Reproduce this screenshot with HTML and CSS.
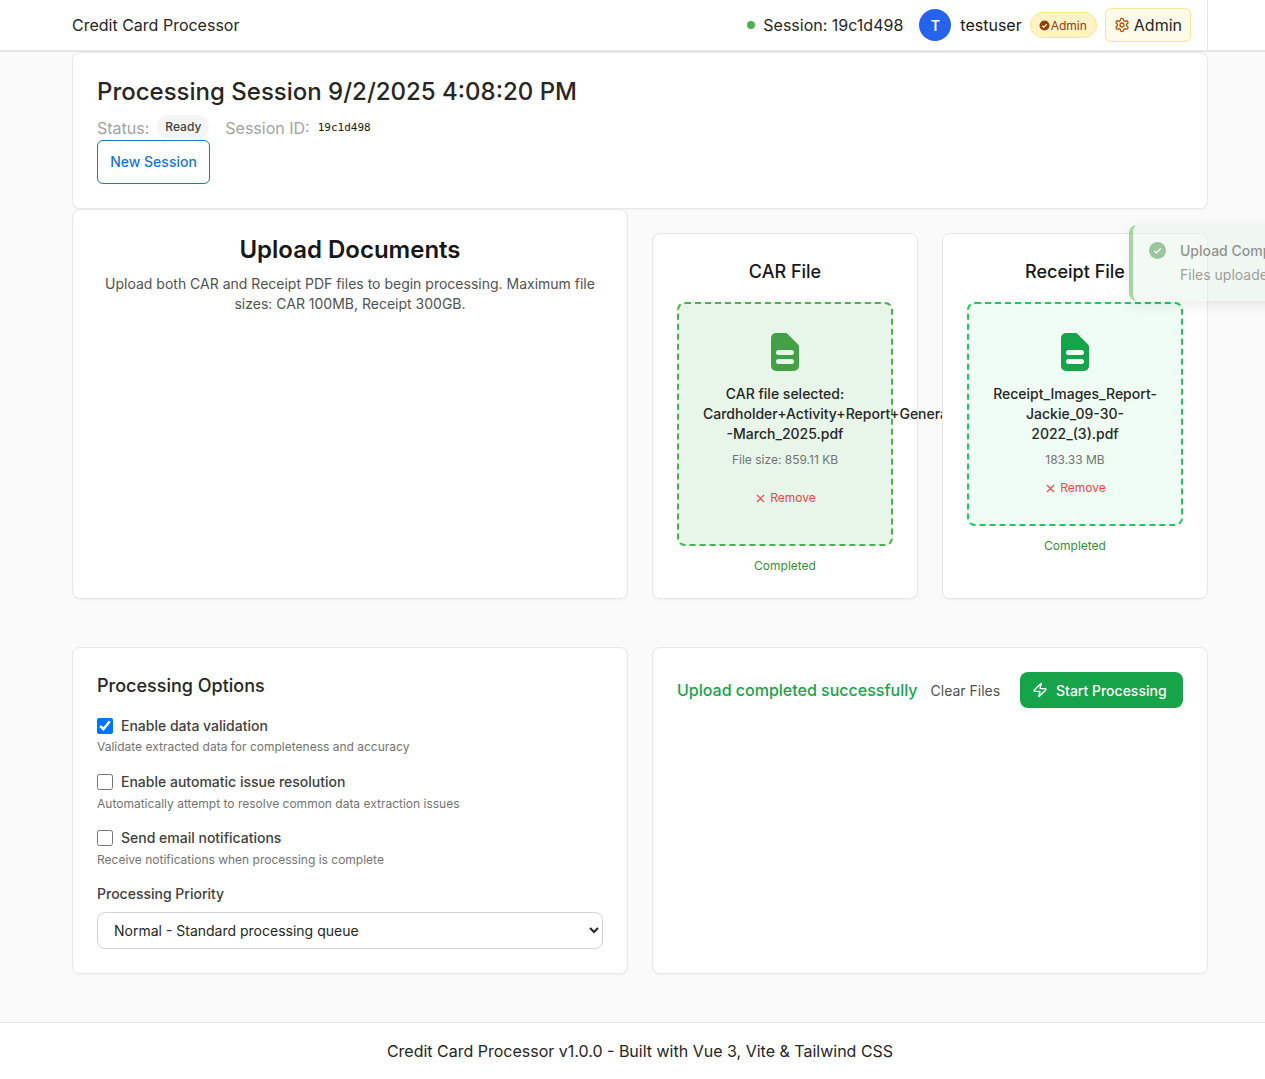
FILE: index.html
```html
<!DOCTYPE html>
<html lang="en">
<head>
  <meta http-equiv="Content-Type" content="text/html; charset=UTF-8">
  <title>Credit Card Processor</title>
  <link rel="stylesheet" href="styles.css">
</head>
<body>
  <div class="app">
    <header class="topbar">
      <div class="topbar-inner">
        <span class="brand">Credit Card Processor</span>
        <div class="topbar-right">
          <span class="session-dot"></span>
          <span class="session-label">Session: 19c1d498</span>
          <span class="avatar">T</span>
          <span class="username">testuser</span>
          <span class="role-pill">
            <svg class="role-icon" viewBox="0 0 24 24"><circle cx="12" cy="12" r="11" fill="#92400e"/><path d="M7 12.500l3.500 3.500 6.500-7" fill="none" stroke="#fef3c7" stroke-width="3"/></svg>
            Admin
          </span>
          <button class="admin-btn">
            <svg class="gear" viewBox="0 0 24 24" fill="none" stroke="#b45309" stroke-width="2" stroke-linecap="round" stroke-linejoin="round"><path d="M12.220 2h-.44a2 2 0 0 0-2 2v.18a2 2 0 0 1-1 1.730l-.43.25a2 2 0 0 1-2 0l-.15-.08a2 2 0 0 0-2.730.73l-.22.38a2 2 0 0 0 .73 2.730l.15.1a2 2 0 0 1 1 1.720v.51a2 2 0 0 1-1 1.740l-.15.09a2 2 0 0 0-.73 2.730l.22.380a2 2 0 0 0 2.730.73l.15-.08a2 2 0 0 1 2 0l.43.25a2 2 0 0 1 1 1.730V20a2 2 0 0 0 2 2h.44a2 2 0 0 0 2-2v-.18a2 2 0 0 1 1-1.730l.43-.25a2 2 0 0 1 2 0l.15.08a2 2 0 0 0 2.730-.73l.22-.39a2 2 0 0 0-.73-2.730l-.15-.08a2 2 0 0 1-1-1.740v-.5a2 2 0 0 1 1-1.740l.15-.09a2 2 0 0 0 .73-2.730l-.22-.380a2 2 0 0 0-2.730-.73l-.15.08a2 2 0 0 1-2 0l-.43-.25a2 2 0 0 1-1-1.730V4a2 2 0 0 0-2-2z"/><circle cx="12" cy="12" r="3"/></svg>
            Admin
          </button>
        </div>
      </div>
    </header>

    <main class="container">
      <section class="card session-card">
        <h1 class="session-title">Processing Session 9/2/2025 4:08:20 PM</h1>
        <div class="session-meta">
          <span class="meta-label">Status:</span>
          <span class="status-pill">Ready</span>
          <span class="meta-label meta-gap">Session ID:</span>
          <code class="session-id">19c1d498</code>
        </div>
        <button class="new-session">New Session</button>
      </section>

      <div class="upload-grid">
        <section class="card upload-intro">
          <h2>Upload Documents</h2>
          <p>Upload both CAR and Receipt PDF files to begin processing. Maximum file sizes: CAR 100MB, Receipt 300GB.</p>
        </section>
        <div class="file-cards">
          <section class="card file-card">
            <h3>CAR File</h3>
            <div class="dropzone dropzone-car">
              <svg class="file-icon" viewBox="0 0 28 38"><path d="M5 0h9.500a3 3 0 0 1 2.100.9l10.500 10.500a3 3 0 0 1 .9 2.100V33a5 5 0 0 1-5 5H5a5 5 0 0 1-5-5V5a5 5 0 0 1 5-5z" fill="#43a047"/><rect x="5" y="17" width="18" height="5" rx="2.500" fill="#e8f5e9"/><rect x="5" y="26" width="18" height="5" rx="2.500" fill="#e8f5e9"/></svg>
              <p class="file-name">CAR file selected: Cardholder+Activity+Report+General<wbr>-March_2025.pdf</p>
              <p class="file-size">File size: 859.11 KB</p>
              <button class="remove remove-spaced"><svg class="remove-x" viewBox="0 0 24 24" fill="none" stroke="currentColor" stroke-width="2" stroke-linecap="round"><path d="M18 6L6 18M6 6l12 12"/></svg>Remove</button>
            </div>
            <p class="file-state">Completed</p>
          </section>
          <section class="card file-card">
            <h3>Receipt File</h3>
            <div class="dropzone dropzone-receipt">
              <svg class="file-icon" viewBox="0 0 28 38"><path d="M5 0h9.500a3 3 0 0 1 2.100.9l10.500 10.500a3 3 0 0 1 .9 2.100V33a5 5 0 0 1-5 5H5a5 5 0 0 1-5-5V5a5 5 0 0 1 5-5z" fill="#16a34a"/><rect x="5" y="17" width="18" height="5" rx="2.500" fill="#f0fdf4"/><rect x="5" y="26" width="18" height="5" rx="2.500" fill="#f0fdf4"/></svg>
              <p class="file-name">Receipt_Images_Report-Jackie_09-30-2022_(3).pdf</p>
              <p class="file-size">183.33 MB</p>
              <button class="remove"><svg class="remove-x" viewBox="0 0 24 24" fill="none" stroke="currentColor" stroke-width="2" stroke-linecap="round"><path d="M18 6L6 18M6 6l12 12"/></svg>Remove</button>
            </div>
            <p class="file-state">Completed</p>
          </section>
        </div>
      </div>

      <div class="bottom-grid">
        <section class="card options-card">
          <h3>Processing Options</h3>
          <div class="option">
            <label class="option-label"><input type="checkbox" checked>Enable data validation</label>
            <p class="option-help">Validate extracted data for completeness and accuracy</p>
          </div>
          <div class="option">
            <label class="option-label"><input type="checkbox">Enable automatic issue resolution</label>
            <p class="option-help">Automatically attempt to resolve common data extraction issues</p>
          </div>
          <div class="option">
            <label class="option-label"><input type="checkbox">Send email notifications</label>
            <p class="option-help">Receive notifications when processing is complete</p>
          </div>
          <label class="priority-label">Processing Priority</label>
          <select class="priority">
            <option>Normal - Standard processing queue</option>
          </select>
        </section>
        <section class="card actions-card">
          <div class="actions">
            <span class="upload-ok">Upload completed successfully</span>
            <button class="clear-files">Clear Files</button>
            <button class="start">
              <svg class="zap" viewBox="0 0 24 24" fill="none" stroke="#fff" stroke-width="2" stroke-linecap="round" stroke-linejoin="round"><path d="M4 14a1 1 0 0 1-.78-1.630l9.900-10.200a.5.5 0 0 1 .86.46l-1.920 6.020A1 1 0 0 0 13 10h7a1 1 0 0 1 .78 1.630l-9.900 10.200a.5.5 0 0 1-.86-.46l1.920-6.020A1 1 0 0 0 11 14z"/></svg>
              Start Processing
            </button>
          </div>
        </section>
      </div>
    </main>

    <footer class="footer">Credit Card Processor v1.0.0 - Built with Vue 3, Vite &amp; Tailwind CSS</footer>

    <div class="toast">
      <svg class="toast-icon" viewBox="0 0 24 24"><circle cx="12" cy="12" r="12" fill="#388e3c"/><path d="M7.500 12.500l3 3 6-6.500" fill="none" stroke="#fff" stroke-width="2"/></svg>
      <div class="toast-body">
        <div class="toast-title">Upload Complete</div>
        <div class="toast-text">Files uploaded successfully</div>
      </div>
    </div>
  </div>
</body>
</html>
```

FILE: styles.css
```css
* {
  box-sizing: border-box;
}
html, body {
  margin: 0;
  height: 1079px;
  overflow: hidden;
}
body {
  font-family: Inter, "Liberation Sans", sans-serif;
  color: #171717;
  background: #fafafa;
}
p, h1, h2, h3 {
  margin: 0;
}
button {
  font-family: inherit;
  background: none;
  border: 0;
  padding: 0;
  cursor: pointer;
}
.app {
  position: relative;
  width: 1280px;
  height: 1079px;
  display: flex;
  flex-direction: column;
}

/* top bar */
.topbar {
  height: 52px;
  flex: none;
  background: #fff;
  border-bottom: 2px solid #e5e5e5;
}
.topbar-inner {
  width: 1136px;
  height: 50px;
  margin: 0 auto;
  display: flex;
  align-items: center;
  justify-content: space-between;
  border-right: 1px solid #e5e5e5;
  padding-right: 16px;
}
.brand {
  font-size: 16px;
  color: #262626;
}
.topbar-right {
  display: flex;
  align-items: center;
  font-size: 16px;
}
.session-dot {
  width: 8px;
  height: 8px;
  border-radius: 50%;
  background: #4caf50;
  margin-right: 8px;
}
.session-label {
  color: #262626;
  margin-right: 16px;
}
.avatar {
  width: 32px;
  height: 32px;
  border-radius: 50%;
  background: #2563eb;
  color: #fff;
  font-size: 14px;
  font-weight: 600;
  display: flex;
  align-items: center;
  justify-content: center;
  margin-right: 9px;
}
.username {
  color: #171717;
  margin-right: 8px;
}
.role-pill {
  display: flex;
  align-items: center;
  gap: 1px;
  height: 26px;
  padding: 0 9px 0 8px;
  font-size: 12px;
  color: #92400e;
  background: #fef3c7;
  border: 1px solid #fde68a;
  border-radius: 13px;
  margin-right: 8px;
}
.role-icon {
  width: 11px;
  height: 11px;
}
.admin-btn {
  display: flex;
  align-items: center;
  gap: 4px;
  height: 34px;
  padding: 0 8px;
  font-size: 16px;
  color: #262626;
  background: #fffbeb;
  border: 1px solid #fde68a;
  border-radius: 6px;
}
.gear {
  width: 16px;
  height: 16px;
}

/* page */
.container {
  width: 1136px;
  margin: 0 auto;
  flex: 1;
}
.card {
  position: relative;
  background: #fff;
  border: 1px solid #e8e8e8;
  border-radius: 8px;
  padding: 24px;
  box-shadow: 0 1px 2px rgba(0, 0, 0, 0.04);
}
.session-card {
  height: 157px;
  padding-top: 23px;
}
.session-title {
  font-size: 24px;
  font-weight: 500;
  line-height: 32px;
  color: #262626;
}
.session-meta {
  display: flex;
  align-items: flex-start;
  height: 24px;
  margin-top: 8px;
}
.meta-label {
  font-size: 16px;
  line-height: 24px;
  color: #a3a3a3;
}
.meta-gap {
  margin-left: 16px;
}
.status-pill {
  height: 24px;
  line-height: 24px;
  margin: -1px 0 0 8px;
  padding: 0 8px;
  font-size: 12px;
  font-weight: 500;
  color: #404040;
  background: #f5f5f5;
  border-radius: 12px;
}
.session-id {
  font-family: "DejaVu Sans Mono", monospace;
  font-size: 11px;
  line-height: 20px;
  margin: 2px 0 0 8px;
  color: #171717;
}
.new-session {
  display: block;
  width: 113px;
  height: 44px;
  padding-bottom: 2px;
  font-size: 14px;
  font-weight: 500;
  color: #1976d2;
  border: 1px solid #1976d2;
  border-radius: 6px;
}
.upload-grid {
  display: grid;
  grid-template-columns: 556px 556px;
  gap: 24px;
}
.upload-intro {
  height: 390px;
  text-align: center;
}
.upload-intro h2 {
  font-size: 24px;
  font-weight: 600;
  line-height: 32px;
}
.upload-intro p {
  font-size: 14px;
  line-height: 20px;
  color: #525252;
  margin-top: 8px;
}
.file-cards {
  display: grid;
  grid-template-columns: 266px 266px;
  gap: 24px;
  margin-top: 24px;
}
.file-card {
  text-align: center;
  height: 366px;
}
.file-card h3 {
  font-size: 18px;
  font-weight: 500;
  line-height: 28px;
  margin-bottom: 16px;
}
.dropzone {
  padding: 29px 24px 25px;
  border: 2px dashed;
  border-radius: 8px;
}
.dropzone-car {
  background: #e8f5e9;
  border-color: #4caf50;
}
.dropzone-receipt {
  background: #f0fdf4;
  border-color: #22c55e;
}
.file-icon {
  display: block;
  width: 28px;
  height: 38px;
  margin: 0 auto 13px;
}
.file-name {
  font-size: 14px;
  font-weight: 500;
  line-height: 20px;
  color: #262626;
}
.file-size {
  font-size: 12px;
  line-height: 16px;
  margin-top: 8px;
  color: #737373;
}
.remove {
  display: inline-flex;
  align-items: center;
  gap: 3px;
  font-size: 12px;
  line-height: 16px;
  color: #ef4444;
  margin-top: 12px;
}
.remove-spaced {
  margin-top: 22px;
  margin-bottom: 13px;
}
.remove-x {
  width: 13px;
  height: 13px;
}
.file-state {
  font-size: 12px;
  line-height: 16px;
  margin-top: 12px;
  color: #388e3c;
}

/* bottom row */
.bottom-grid {
  display: grid;
  grid-template-columns: 556px 556px;
  gap: 24px;
  margin-top: 48px;
}
.options-card {
  height: 327px;
}
.options-card h3 {
  font-size: 18px;
  font-weight: 500;
  line-height: 28px;
  color: #262626;
  margin-bottom: 16px;
}
.option {
  margin-bottom: 16.800px;
}
.option-label {
  display: flex;
  align-items: center;
  font-size: 14px;
  font-weight: 500;
  line-height: 20px;
  color: #404040;
}
.option-label input {
  width: 16px;
  height: 16px;
  margin: 0 8px 0 0;
}
.option-help {
  font-size: 12px;
  line-height: 16px;
  margin-top: 3.400px;
  color: #737373;
}
.priority-label {
  display: block;
  font-size: 14px;
  font-weight: 500;
  line-height: 20px;
  color: #404040;
  margin: -0.600px 0 8px;
}
.priority {
  display: block;
  width: 100%;
  height: 37px;
  padding: 0 12px;
  font-family: inherit;
  font-size: 14px;
  color: #262626;
  background: #fff;
  border: 1px solid #d4d4d8;
  border-radius: 8px;
}
.actions {
  display: flex;
  align-items: center;
  height: 36px;
  white-space: nowrap;
}
.upload-ok {
  font-size: 16px;
  font-weight: 500;
  color: #16a34a;
  margin-right: 13px;
}
.clear-files {
  font-size: 14px;
  color: #525252;
  margin-right: auto;
}
.start {
  display: flex;
  flex: none;
  align-items: center;
  gap: 8px;
  width: 163px;
  height: 36px;
  padding: 0 12px;
  font-size: 14px;
  font-weight: 500;
  color: #fff;
  background: #16a34a;
  border-radius: 8px;
}
.zap {
  width: 16px;
  height: 16px;
}

.footer {
  height: 57px;
  flex: none;
  background: #fff;
  border-top: 1px solid #e5e5e5;
  font-size: 16px;
  line-height: 56px;
  text-align: center;
  color: #262626;
}

/* toast, fading in over the receipt card */
.toast {
  position: absolute;
  left: 1129px;
  top: 225px;
  width: 320px;
  height: 76px;
  display: flex;
  gap: 14px;
  padding: 17px 16px;
  background: #e8f5e9;
  border-left: 4px solid #4caf50;
  border-radius: 8px;
  box-shadow: 0 4px 12px rgba(0, 0, 0, 0.15);
  opacity: 0.5;
}
.toast-icon {
  width: 17px;
  height: 17px;
  flex: none;
}
.toast-title {
  font-size: 14px;
  font-weight: 500;
  line-height: 18px;
  color: #262626;
}
.toast-text {
  font-size: 14px;
  line-height: 20px;
  margin-top: 5px;
  color: #404040;
}
```
